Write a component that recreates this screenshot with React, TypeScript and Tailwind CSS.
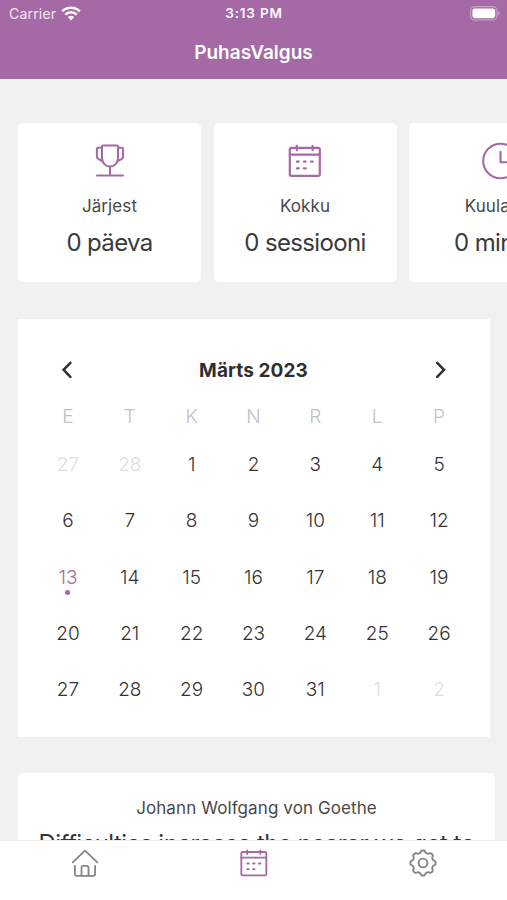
import { ReactNode } from "react";

type Stat = {
  icon: ReactNode;
  label: string;
  value: string;
}

const weekdays = ["E", "T", "K", "N", "R", "L", "P"];

const today = 13;

const days = [
  ...[27, 28].map((day) => ({ day, muted: true })),
  ...Array.from({ length: 31 }, (_, i) => ({ day: i + 1, muted: false })),
  ...[1, 2].map((day) => ({ day, muted: true })),
];

// eight soft teeth around the centre of a 30x30 box
const gearPath = Array.from({ length: 96 }, (_, i) => {
  const angle = (i / 96) * Math.PI * 2;
  const wave = Math.cos(angle * 8);
  const radius = 11.5 + 1.2 * Math.tanh(wave * 1.8);
  const x = (15 + radius * Math.sin(angle)).toFixed(2);
  const y = (15 - radius * Math.cos(angle)).toFixed(2);
  return `${i === 0 ? "M" : "L"}${x} ${y}`;
}).join("") + "Z";

function WifiIcon() {
  return (
    <svg width="20" height="15" viewBox="0 0 20 15" fill="none" stroke="white" strokeWidth="2.5">
      <path d="M1.2 5.3a12.4 12.4 0 0 1 17.6 0" />
      <path d="M4.3 8.6a8 8 0 0 1 11.4 0" />
      <path d="M10 14.4 6.8 11.1a4.6 4.6 0 0 1 6.4 0Z" fill="white" stroke="none" />
    </svg>
  );
}

function BatteryIcon() {
  return (
    <svg width="31" height="15" viewBox="0 0 31 15" fill="none">
      <rect x="0.6" y="0.6" width="26.4" height="13.4" rx="4" stroke="white" strokeOpacity="0.4" strokeWidth="1.1" />
      <rect x="2.4" y="2.4" width="22.8" height="9.8" rx="2.4" fill="white" />
      <path d="M28.4 5.2v4.2c1.6-.6 1.6-3.6 0-4.2Z" fill="white" fillOpacity="0.5" />
    </svg>
  );
}

function TrophyIcon() {
  return (
    <svg width="36" height="36" viewBox="0 0 36 36" fill="none" stroke="#a569a5" strokeWidth="2" strokeLinecap="round" strokeLinejoin="round">
      <path d="M11 2.6h14a1 1 0 0 1 1 1V15a8 8.6 0 0 1-16 0V3.6a1 1 0 0 1 1-1Z" />
      <path d="M10 4.8H5.9a1 1 0 0 0-1 1v7.8a3 3 0 0 0 1.2 2.2l4.2 2.2" />
      <path d="M26 4.8h4.1a1 1 0 0 1 1 1v7.8a3 3 0 0 1-1.2 2.2l-4.2 2.2" />
      <path d="M18 23.6v8.6M5 32.6h26" />
    </svg>
  );
}

function CalendarIcon({ className }: { className?: string }) {
  return (
    <svg className={className} viewBox="0 0 36 36" fill="none" stroke="#a569a5" strokeWidth="2.2" strokeLinecap="round" strokeLinejoin="round">
      <rect x="2.8" y="4.8" width="30" height="28" rx="1.6" />
      <path d="M2.8 11.6h30M9.8 2.8v4.4M25.6 2.8v4.4" />
      <path d="M9.9 18.6h1.8M16.9 18.6h1.8M23.9 18.6h1.8M9.9 25.4h1.8M16.9 25.4h1.8" />
    </svg>
  );
}

function ClockIcon() {
  return (
    <svg width="38" height="38" viewBox="0 0 38 38" fill="none" stroke="#a569a5" strokeWidth="2.1" strokeLinecap="round" strokeLinejoin="round">
      <circle cx="18.5" cy="19" r="17.3" />
      <path d="M18.5 9.8v10.4h8" />
    </svg>
  );
}

function HomeIcon() {
  return (
    <svg width="30" height="30" viewBox="0 0 30 30" fill="none" stroke="#858585" strokeWidth="1.8" strokeLinecap="round" strokeLinejoin="round">
      <path d="M2.7 14.3 15 2.6l12.3 11.7" />
      <path d="M4.9 17.8V26a1.9 1.9 0 0 0 1.9 1.9h16.4a1.9 1.9 0 0 0 1.9-1.9v-8.2" />
      <path d="M11.5 27.5v-8a1.6 1.6 0 0 1 1.6-1.6h3.8a1.6 1.6 0 0 1 1.6 1.6v8" />
    </svg>
  );
}

function GearIcon() {
  return (
    <svg width="30" height="30" viewBox="0 0 30 30" fill="none" stroke="#858585" strokeWidth="1.9" strokeLinejoin="round">
      <path d={gearPath} />
      <circle cx="15" cy="15" r="4.4" />
    </svg>
  );
}

function Chevron({ d }: { d: string }) {
  return (
    <svg width="12" height="18" viewBox="0 0 12 18" fill="none" stroke="#2f2f2f" strokeWidth="2.5" strokeLinecap="round">
      <path d={d} />
    </svg>
  );
}

const stats: Stat[] = [
  { icon: <TrophyIcon />, label: "Järjest", value: "0 päeva" },
  { icon: <CalendarIcon className="size-9" />, label: "Kokku", value: "0 sessiooni" },
  { icon: <ClockIcon />, label: "Kuulatud", value: "0 minutit" },
];

function StatCard({ icon, label, value }: Stat) {
  return (
    <div className="flex h-[158.5px] w-[183px] shrink-0 flex-col items-center rounded-[5px] bg-white pt-[19px]">
      <div className="flex h-[38px] items-center">{icon}</div>
      <p className="mt-[14px] text-[17px] leading-6 tracking-[0.1px] text-[#484848]">{label}</p>
      <p className="mt-[9px] text-2xl leading-8 tracking-[-0.65px] whitespace-nowrap text-[#3a3a3a]">{value}</p>
    </div>
  );
}

export default function App() {
  return (
    <div className="flex h-[900px] w-[507px] flex-col overflow-hidden bg-[#f1f1f1] font-['Inter',sans-serif]">
      <header className="h-[79px] shrink-0 bg-[#a569a5] text-white">
        <div className="grid h-[27px] grid-cols-3 items-center pr-[6px] pl-[9px] text-sm">
          <div className="flex items-center gap-[5px]">
            <span className="tracking-[0.2px] text-white/85">Carrier</span>
            <WifiIcon />
          </div>
          <span className="pr-[2px] text-center text-[13.5px] font-semibold tracking-[0.8px]">3:13 PM</span>
          <div className="flex justify-end">
            <BatteryIcon />
          </div>
        </div>
        <h1 className="mt-[12px] text-center text-[19px] leading-7 font-semibold">PuhasValgus</h1>
      </header>

      <main className="min-h-0 flex-1 overflow-hidden pt-11 pl-[18px]">
        <section className="flex gap-[12.5px]">
          {stats.map((stat) => (
            <StatCard key={stat.label} {...stat} />
          ))}
        </section>

        <section className="mt-[37px] h-[418.5px] w-[472px] bg-white pt-[37px] pr-5 pl-[19px]">
          <div className="flex h-7 items-center justify-between px-6">
            <button type="button" aria-label="Eelmine kuu">
              <Chevron d="M9.4 1.8 2.6 8.8l6.8 7" />
            </button>
            <h2 className="pt-[3px] text-[19px] font-bold tracking-[0.1px] text-[#2f2f2f]">Märts 2023</h2>
            <button type="button" aria-label="Järgmine kuu">
              <Chevron d="M3.2 1.8 10 8.8l-6.8 7" />
            </button>
          </div>
          <div className="mt-[19px] grid grid-cols-7 text-center text-[19px] leading-7 font-light text-[#bcc3c9]">
            {weekdays.map((weekday) => (
              <span key={weekday}>{weekday}</span>
            ))}
          </div>
          <div className="mt-[20.8px] grid auto-rows-[56.2px] grid-cols-7 text-center text-[19px] leading-7 font-light">
            {days.map(({ day, muted }, index) => (
              <div
                key={index}
                className={muted ? "text-[#d9e1e8]" : day === today ? "text-[#a569a5]" : "text-[#333333]"}
              >
                {day}
                {!muted && day === today && (
                  <span className="mx-auto mt-[-2px] block size-[5px] rounded-full bg-[#a569a5]" />
                )}
              </div>
            ))}
          </div>
        </section>

        <section className="mt-9 h-[200px] w-[477px] rounded-[5px] bg-white pt-[23px] text-center">
          <p className="text-[17px] leading-6 tracking-[0.1px] text-[#484848]">Johann Wolfgang von Goethe</p>
          <p className="mt-[7.5px] text-2xl leading-8 tracking-[-0.54px] whitespace-nowrap text-[#343434]">
            Difficulties increase the nearer we get to
          </p>
        </section>
      </main>

      <nav className="grid h-[60px] shrink-0 grid-cols-3 justify-items-center border-t border-[#ececec] bg-white pt-[7px]">
        <HomeIcon />
        <CalendarIcon className="size-[30px]" />
        <GearIcon />
      </nav>
    </div>
  );
}
